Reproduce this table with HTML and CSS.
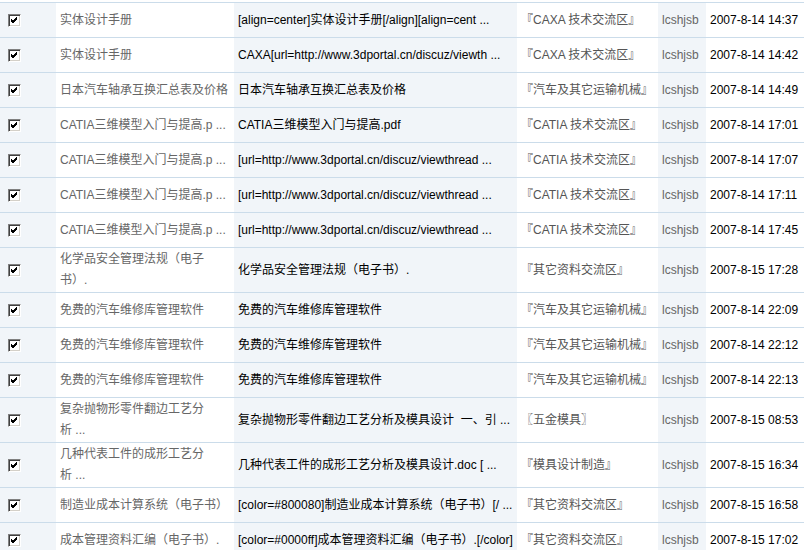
FILE: index.html
```html
<!DOCTYPE html>
<html lang="zh">
<head>
<meta charset="utf-8">
<title>帖子列表</title>
<link rel="stylesheet" href="styles.css">
</head>
<body>
<div class="wrap">
<table class="list">
  <colgroup>
    <col class="c-chk"><col class="c-subj"><col class="c-msg"><col class="c-forum"><col class="c-author"><col class="c-date">
  </colgroup>
  <tbody>
    <tr><td class="chk"><span class="cb"><svg viewBox="0 0 7 7" width="7" height="7"><path d="M0 3 L2 5 L6 1 M0 4 L2 6 L6 2 M0 2 L2 4 L6 0" fill="none" stroke="#000" stroke-width="1"/></svg></span></td><td class="subj">实体设计手册</td><td class="msg">[align=center]实体设计手册[/align][align=cent ...</td><td class="forum">『CAXA 技术交流区』</td><td class="author">lcshjsb</td><td class="date">2007-8-14 14:37</td></tr>
    <tr><td class="chk"><span class="cb"><svg viewBox="0 0 7 7" width="7" height="7"><path d="M0 3 L2 5 L6 1 M0 4 L2 6 L6 2 M0 2 L2 4 L6 0" fill="none" stroke="#000" stroke-width="1"/></svg></span></td><td class="subj">实体设计手册</td><td class="msg">CAXA[url=http://www.3dportal.cn/discuz/viewth ...</td><td class="forum">『CAXA 技术交流区』</td><td class="author">lcshjsb</td><td class="date">2007-8-14 14:42</td></tr>
    <tr><td class="chk"><span class="cb"><svg viewBox="0 0 7 7" width="7" height="7"><path d="M0 3 L2 5 L6 1 M0 4 L2 6 L6 2 M0 2 L2 4 L6 0" fill="none" stroke="#000" stroke-width="1"/></svg></span></td><td class="subj">日本汽车轴承互换汇总表及价格</td><td class="msg">日本汽车轴承互换汇总表及价格</td><td class="forum">『汽车及其它运输机械』</td><td class="author">lcshjsb</td><td class="date">2007-8-14 14:49</td></tr>
    <tr><td class="chk"><span class="cb"><svg viewBox="0 0 7 7" width="7" height="7"><path d="M0 3 L2 5 L6 1 M0 4 L2 6 L6 2 M0 2 L2 4 L6 0" fill="none" stroke="#000" stroke-width="1"/></svg></span></td><td class="subj">CATIA三维模型入门与提高.p ...</td><td class="msg">CATIA三维模型入门与提高.pdf</td><td class="forum">『CATIA 技术交流区』</td><td class="author">lcshjsb</td><td class="date">2007-8-14 17:01</td></tr>
    <tr><td class="chk"><span class="cb"><svg viewBox="0 0 7 7" width="7" height="7"><path d="M0 3 L2 5 L6 1 M0 4 L2 6 L6 2 M0 2 L2 4 L6 0" fill="none" stroke="#000" stroke-width="1"/></svg></span></td><td class="subj">CATIA三维模型入门与提高.p ...</td><td class="msg">[url=http://www.3dportal.cn/discuz/viewthread ...</td><td class="forum">『CATIA 技术交流区』</td><td class="author">lcshjsb</td><td class="date">2007-8-14 17:07</td></tr>
    <tr><td class="chk"><span class="cb"><svg viewBox="0 0 7 7" width="7" height="7"><path d="M0 3 L2 5 L6 1 M0 4 L2 6 L6 2 M0 2 L2 4 L6 0" fill="none" stroke="#000" stroke-width="1"/></svg></span></td><td class="subj">CATIA三维模型入门与提高.p ...</td><td class="msg">[url=http://www.3dportal.cn/discuz/viewthread ...</td><td class="forum">『CATIA 技术交流区』</td><td class="author">lcshjsb</td><td class="date">2007-8-14 17:11</td></tr>
    <tr><td class="chk"><span class="cb"><svg viewBox="0 0 7 7" width="7" height="7"><path d="M0 3 L2 5 L6 1 M0 4 L2 6 L6 2 M0 2 L2 4 L6 0" fill="none" stroke="#000" stroke-width="1"/></svg></span></td><td class="subj">CATIA三维模型入门与提高.p ...</td><td class="msg">[url=http://www.3dportal.cn/discuz/viewthread ...</td><td class="forum">『CATIA 技术交流区』</td><td class="author">lcshjsb</td><td class="date">2007-8-14 17:45</td></tr>
    <tr><td class="chk"><span class="cb"><svg viewBox="0 0 7 7" width="7" height="7"><path d="M0 3 L2 5 L6 1 M0 4 L2 6 L6 2 M0 2 L2 4 L6 0" fill="none" stroke="#000" stroke-width="1"/></svg></span></td><td class="subj">化学品安全管理法规（电子<br>书）.</td><td class="msg">化学品安全管理法规（电子书）.</td><td class="forum">『其它资料交流区』</td><td class="author">lcshjsb</td><td class="date">2007-8-15 17:28</td></tr>
    <tr><td class="chk"><span class="cb"><svg viewBox="0 0 7 7" width="7" height="7"><path d="M0 3 L2 5 L6 1 M0 4 L2 6 L6 2 M0 2 L2 4 L6 0" fill="none" stroke="#000" stroke-width="1"/></svg></span></td><td class="subj">免费的汽车维修库管理软件</td><td class="msg">免费的汽车维修库管理软件</td><td class="forum">『汽车及其它运输机械』</td><td class="author">lcshjsb</td><td class="date">2007-8-14 22:09</td></tr>
    <tr><td class="chk"><span class="cb"><svg viewBox="0 0 7 7" width="7" height="7"><path d="M0 3 L2 5 L6 1 M0 4 L2 6 L6 2 M0 2 L2 4 L6 0" fill="none" stroke="#000" stroke-width="1"/></svg></span></td><td class="subj">免费的汽车维修库管理软件</td><td class="msg">免费的汽车维修库管理软件</td><td class="forum">『汽车及其它运输机械』</td><td class="author">lcshjsb</td><td class="date">2007-8-14 22:12</td></tr>
    <tr><td class="chk"><span class="cb"><svg viewBox="0 0 7 7" width="7" height="7"><path d="M0 3 L2 5 L6 1 M0 4 L2 6 L6 2 M0 2 L2 4 L6 0" fill="none" stroke="#000" stroke-width="1"/></svg></span></td><td class="subj">免费的汽车维修库管理软件</td><td class="msg">免费的汽车维修库管理软件</td><td class="forum">『汽车及其它运输机械』</td><td class="author">lcshjsb</td><td class="date">2007-8-14 22:13</td></tr>
    <tr><td class="chk"><span class="cb"><svg viewBox="0 0 7 7" width="7" height="7"><path d="M0 3 L2 5 L6 1 M0 4 L2 6 L6 2 M0 2 L2 4 L6 0" fill="none" stroke="#000" stroke-width="1"/></svg></span></td><td class="subj">复杂抛物形零件翻边工艺分<br>析 ...</td><td class="msg">复杂抛物形零件翻边工艺分析及模具设计 &nbsp;一、引 ...</td><td class="forum">〖五金模具〗</td><td class="author">lcshjsb</td><td class="date">2007-8-15 08:53</td></tr>
    <tr><td class="chk"><span class="cb"><svg viewBox="0 0 7 7" width="7" height="7"><path d="M0 3 L2 5 L6 1 M0 4 L2 6 L6 2 M0 2 L2 4 L6 0" fill="none" stroke="#000" stroke-width="1"/></svg></span></td><td class="subj">几种代表工件的成形工艺分<br>析 ...</td><td class="msg">几种代表工件的成形工艺分析及模具设计.doc [ ...</td><td class="forum">『模具设计制造』</td><td class="author">lcshjsb</td><td class="date">2007-8-15 16:34</td></tr>
    <tr><td class="chk"><span class="cb"><svg viewBox="0 0 7 7" width="7" height="7"><path d="M0 3 L2 5 L6 1 M0 4 L2 6 L6 2 M0 2 L2 4 L6 0" fill="none" stroke="#000" stroke-width="1"/></svg></span></td><td class="subj">制造业成本计算系统（电子书）</td><td class="msg">[color=#800080]制造业成本计算系统（电子书）[/ ...</td><td class="forum">『其它资料交流区』</td><td class="author">lcshjsb</td><td class="date">2007-8-15 16:58</td></tr>
    <tr><td class="chk"><span class="cb"><svg viewBox="0 0 7 7" width="7" height="7"><path d="M0 3 L2 5 L6 1 M0 4 L2 6 L6 2 M0 2 L2 4 L6 0" fill="none" stroke="#000" stroke-width="1"/></svg></span></td><td class="subj">成本管理资料汇编（电子书）.</td><td class="msg">[color=#0000ff]成本管理资料汇编（电子书）.[/color]</td><td class="forum">『其它资料交流区』</td><td class="author">lcshjsb</td><td class="date">2007-8-15 17:02</td></tr>
  </tbody>
</table>
</div>
</body>
</html>
```

FILE: styles.css
```css
html, body {
  margin: 0;
  padding: 0;
  overflow: hidden;
  background: #ffffff;
}

.wrap {
  padding-top: 2px;
}

.list {
  border-collapse: collapse;
  table-layout: fixed;
  width: 820px;
  font-family: "Liberation Sans", "Noto Sans CJK SC", sans-serif;
  font-size: 12px;
  border-top: 1px solid #cbdcea;
}

.c-chk { width: 56px; }
.c-subj { width: 178px; }
.c-msg { width: 283px; }
.c-forum { width: 141px; }
.c-author { width: 48px; }
.c-date { width: 114px; }

.list tr {
  height: 35px;
}

.list td {
  padding: 1px 4px;
  line-height: 21px;
  border-bottom: 1px solid #cbdcea;
  vertical-align: middle;
  white-space: nowrap;
  overflow: hidden;
}

.chk {
  background: #f1f5f9;
}

.cb {
  display: block;
  box-sizing: border-box;
  width: 13px;
  height: 13px;
  margin-left: 4px;
  border-top: 1px solid #808080;
  border-left: 1px solid #808080;
  border-right: 1px solid #ffffff;
  border-bottom: 1px solid #ffffff;
  box-shadow: inset 1px 1px 0 #404040, inset -1px -1px 0 #d4d0c8;
  background: #ffffff;
  position: relative;
}

.cb svg {
  position: absolute;
  left: 2px;
  top: 2px;
}

.subj {
  color: #666666;
}

.msg {
  background: #f1f5f9;
  color: #000000;
}

.forum {
  color: #555555;
}

.author {
  background: #f1f5f9;
  color: #666666;
}

.date {
  color: #000000;
}
```
